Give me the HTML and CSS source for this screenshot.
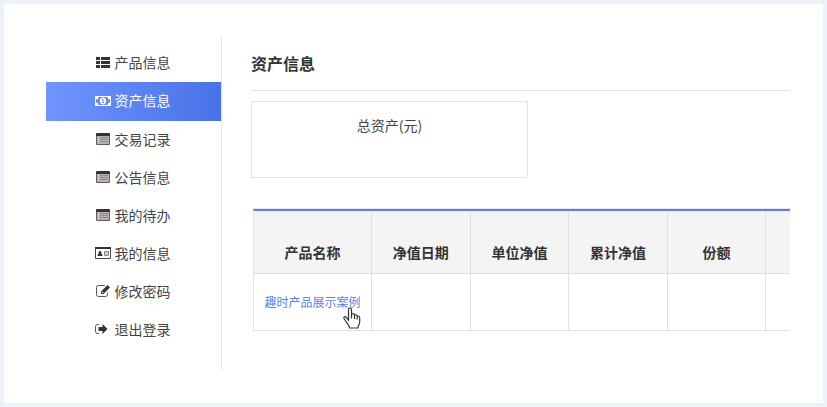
FILE: index.html
```html
<!DOCTYPE html>
<html lang="zh-CN">
<head>
    <meta charset="UTF-8">
    <title>资产信息</title>
    <link rel="stylesheet" href="styles.css">
</head>
<body>
<!-- 列表图标,三个菜单共用 -->
<svg class="defs" aria-hidden="true">
    <symbol id="icon-list" viewBox="0 0 16 14">
        <path fill="#b4b2b2" d="M1 4h14v8H1z"/>
        <path fill="#8d8b8b" d="M5 5h8v1H5zM5 7h8v1H5zM5 9h8v1H5z"/>
        <path fill="#dedede" d="M3 5h1v1H3zM3 7h1v1H3zM3 9h1v1H3z"/>
        <path fill="none" stroke="#6a5658" d="M1.5 3v9.5h13V3"/>
        <path fill="#333" d="M2 1h12a1 1 0 0 1 1 1v2H1V2a1 1 0 0 1 1-1z"/>
    </symbol>
</svg>
<div class="page">
    <ul class="menu">
        <li><a href="#">
            <svg class="icon" viewBox="0 0 16 14"><path d="M1 2h4v3H1zM6 2h9v3H6zM1 6h4v3H1zM6 6h9v3H6zM1 10h4v3H1zM6 10h9v3H6z"/></svg>
            产品信息</a></li>
        <li class="active"><a href="#">
            <svg class="icon" viewBox="0 0 16 14"><path fill-rule="evenodd" d="M0 2h16v10H0zM3.500 3H12.500A2.500 2.500 0 0 0 15 5.500v3A2.500 2.500 0 0 0 12.500 11h-9A2.500 2.500 0 0 0 1 8.500v-3A2.500 2.500 0 0 0 3.500 3z"/><path fill-rule="evenodd" d="M8 3.500c2 0 3.200 1.500 3.200 3.500S10 10.500 8 10.500 4.800 9 4.800 7 6 3.500 8 3.500zM7.600 5l-1 .8.400.6.500-.3V8.300H6.800V9h2.500v-.7h-.8V5z"/></svg>
            资产信息</a></li>
        <li><a href="#"><svg class="icon"><use href="#icon-list"/></svg> 交易记录</a></li>
        <li><a href="#"><svg class="icon"><use href="#icon-list"/></svg> 公告信息</a></li>
        <li><a href="#"><svg class="icon"><use href="#icon-list"/></svg> 我的待办</a></li>
        <li><a href="#">
            <svg class="icon" viewBox="0 0 16 14"><path fill="none" stroke="#444" d="M.5 2v10.500h15V2"/><path d="M0 1h16v2H0zM5 5a1.500 1.500 0 0 1 1 2.600c1 .2 1.500 1 1.500 2.400h-5c0-1.400.5-2.200 1.500-2.400A1.500 1.500 0 0 1 5 5z"/><path fill="#ccc" stroke="#888" d="M9.500 5.500h4v4h-4z"/></svg>
            我的信息</a></li>
        <li><a href="#">
            <svg class="icon" viewBox="0 0 16 14"><path fill="none" stroke="#555" d="M10 1.500H3.500a2 2 0 0 0-2 2v7a2 2 0 0 0 2 2h7a2 2 0 0 0 2-2V8.500"/><path fill-rule="evenodd" d="M12.500 1L15 3.500 8.500 10H6V7.500zM7 8v1h1l.5-.5-1-1z"/></svg>
            修改密码</a></li>
        <li><a href="#">
            <svg class="icon" viewBox="0 0 16 14"><path fill="none" stroke="#555" d="M4 2.500H2.500a2 2 0 0 0-2 2v5a2 2 0 0 0 2 2H4"/><path d="M7.500 2l5 5-5 5V9H3.500V5h4z"/></svg>
            退出登录</a></li>
    </ul>
    <div class="main">
        <h1>资产信息</h1>
        <div class="total">总资产(元)</div>
        <div class="list">
            <table>
                <thead>
                <tr>
                    <th class="name">产品名称</th>
                    <th>净值日期</th>
                    <th>单位净值</th>
                    <th>累计净值</th>
                    <th>份额</th>
                    <th></th>
                </tr>
                </thead>
                <tbody>
                <tr>
                    <td><a href="#">趣时产品展示案例<svg class="hand" viewBox="0 0 18 22"><path fill="#fff" stroke="#333" stroke-width="1.200" stroke-linejoin="round" d="M5.500 14V2.500a1.500 1.500 0 0 1 3 0V8c0-2 3-1.800 3 0v1c0-1.800 2.700-1.500 2.700 0v1c0-1.500 2.500-1.300 2.500.5V15c0 2.500-1.700 3-1.700 6H6.500c0-2.500-2-4-3.500-6.500L1 11.500c-.8-1.600 1.200-2.500 2.300-1.200L5.500 13M8.500 8v3.500M11.500 9v3M14.200 10v2.500"/></svg></a></td>
                    <td></td>
                    <td></td>
                    <td></td>
                    <td></td>
                    <td></td>
                </tr>
                </tbody>
            </table>
        </div>
    </div>
</div>
</body>
</html>
```
FILE: styles.css
```css
* {
    margin: 0;
    padding: 0;
    box-sizing: border-box;
}

ul, li {
    list-style: none;
}

a {
    text-decoration: none;
}

html, body {
    height: 100%;
}

body {
    padding: 4px;
    background: #ecf2fa;
    color: #444;
    font: 14px/20px "Noto Sans CJK SC", sans-serif;
}

.defs {
    position: absolute;
    width: 0;
    height: 0;
}

.page {
    display: flex;
    min-height: 100%;
    padding: 33px 33px 33px 42px;
    background: #fff;
}

.menu {
    flex: none;
    width: 176px;
    padding-top: 7px;
    border-right: 1px solid #e4e4e4;
}

.menu a {
    display: flex;
    justify-content: center;
    align-items: center;
    gap: 4px;
    padding: 0 2px 2px 0;
    line-height: 36px;
    color: #444;
}

.menu .active {
    background: linear-gradient(to right, #7095ff, #4a72e8);
}

.menu .active a {
    line-height: 37px;
    color: #fff;
}

.icon {
    width: 16px;
    height: 14px;
    fill: #333;
}

.active .icon {
    fill: #fff;
}

.main {
    flex: 1;
    min-width: 0;
    padding-left: 29px;
}

h1 {
    margin-bottom: 10px;
    padding: 14px 0 15px;
    border-bottom: 1px solid #e4e4e4;
    font-size: 16px;
    line-height: 24px;
    color: #333;
}

.total {
    width: 277px;
    padding: 13px 0 42px;
    border: 1px solid #e4e4e4;
    text-align: center;
}

.list {
    margin: 30px 0 0 2px;
    overflow: hidden;
    border-top: 1px solid #e4e4e4;
}

table {
    width: 612px;
    table-layout: fixed;
    border-collapse: separate;
    border-spacing: 0;
    border-top: 2px solid #5c7ff0;
    border-left: 1px solid #e4e4e4;
}

th, td {
    border-right: 1px solid #e0e0e0;
    border-bottom: 1px solid #e0e0e0;
    text-align: center;
}

th {
    padding: 31px 0 11px;
    background: #f4f4f4;
    color: #333;
}

.name {
    width: 118px;
}

td {
    height: 57px;
    padding-bottom: 2px;
}

td a {
    position: relative;
    font-size: 12px;
    color: #5c7ff0;
}

.hand {
    position: absolute;
    right: 0;
    top: 14px;
    width: 18px;
    height: 22px;
}
```
